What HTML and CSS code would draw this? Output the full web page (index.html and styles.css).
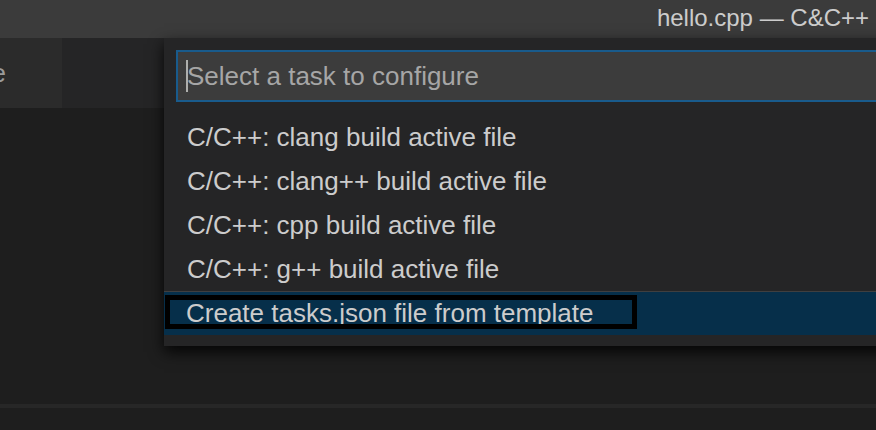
FILE: index.html
```html
<!DOCTYPE html>
<html>
<head>
<meta charset="utf-8">
<link rel="stylesheet" href="styles.css">
</head>
<body>
<div class="window">
  <div class="titlebar"><span class="title">hello.cpp — C&amp;C++</span></div>
  <div class="tabs">
    <div class="tab"><span class="tab-label">Welcome</span><span class="tab-close"></span></div>
  </div>
  <div class="editor">
    <div class="quickpick">
      <div class="qp-input">
        <span class="caret"></span>
        <span class="placeholder">Select a task to configure</span>
      </div>
      <div class="qp-list">
        <div class="qp-row">C/C++: clang build active file</div>
        <div class="qp-row">C/C++: clang++ build active file</div>
        <div class="qp-row">C/C++: cpp build active file</div>
        <div class="qp-row">C/C++: g++ build active file</div>
        <div class="qp-row selected"><div class="focus-box">Create tasks.json file from template</div></div>
      </div>
    </div>
  </div>
  <div class="panel-edge"></div>
  <div class="panel"></div>
</div>
</body>
</html>
```
FILE: styles.css
```css
* { box-sizing: border-box; }
html, body { margin: 0; padding: 0; }
body {
  width: 876px;
  height: 430px;
  overflow: hidden;
  background: #1e1e1e;
  font-family: "Liberation Sans", Arial, sans-serif;
}
.window { display: flex; flex-direction: column; height: 430px; }
.titlebar {
  height: 38px;
  background: #3b3b3b;
  display: flex;
  justify-content: flex-end;
  align-items: center;
  padding-right: 7px;
  color: #cccccc;
  font-size: 24px;
}
.title { margin-top: -3px; white-space: nowrap; }
.tabs {
  height: 70px;
  background: #252526;
  display: flex;
}
.tab {
  width: 62px;
  background: #2b2b2b;
  display: flex;
  justify-content: flex-end;
  align-items: center;
  overflow: hidden;
  color: #9a9a9a;
  font-size: 26px;
}
.tab-label { white-space: nowrap; flex-shrink: 0; }
.tab-close { width: 56px; flex-shrink: 0; }
.editor {
  height: 296px;
  background: #1e1e1e;
  position: relative;
}
.quickpick {
  position: absolute;
  top: -70px;
  left: 164px;
  width: 740px;
  height: 308px;
  background: #252526;
  padding: 12px 0 0 12px;
  box-shadow: 0 6px 14px rgba(0,0,0,0.85);
}
.qp-input {
  height: 52px;
  background: #3c3c3c;
  border: 2px solid #195b8c;
  display: flex;
  align-items: center;
  padding-left: 8px;
}
.caret {
  width: 2px;
  height: 32px;
  background: #aeafad;
  margin-right: -1px;
  flex-shrink: 0;
}
.placeholder {
  color: #a6a6a6;
  font-size: 26px;
  white-space: nowrap;
}
.qp-list {
  margin-left: -12px;
  padding-top: 13px;
}
.qp-row {
  height: 44px;
  line-height: 44px;
  padding-left: 23px;
  color: #cccccc;
  font-size: 26px;
  white-space: nowrap;
}
.qp-row.selected {
  border-top: 1px solid #3f3f40;
  height: 44px;
  background: #062f4a;
  padding: 3px 0 0 1px;
  line-height: normal;
}
.focus-box {
  width: 472px;
  height: 34px;
  border: 5px solid #000;
  overflow: hidden;
  padding-left: 16px;
  line-height: 26px;
  color: #cccccc;
}
.panel-edge { height: 4px; background: #272727; }
.panel { flex: 1; background: #1e1e1e; }
```
